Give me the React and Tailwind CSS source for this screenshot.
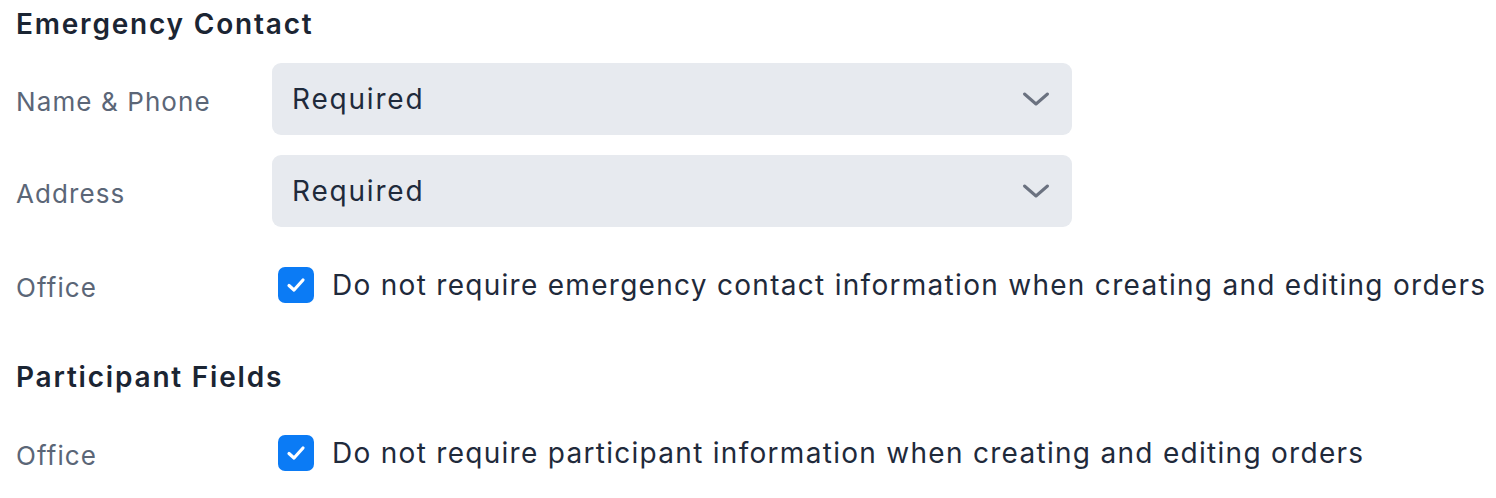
import React from 'react';

const FONT = { fontFamily: 'Inter, "Noto Sans", "Liberation Sans", sans-serif' };

const Chevron = () => (
  <svg width="28" height="16" viewBox="0 0 28 16" fill="none" className="shrink-0">
    <path d="M2.5 3 L14 13 L25.5 3" stroke="#6b7280" strokeWidth="3" strokeLinecap="round" strokeLinejoin="round" />
  </svg>
);

const Check = () => (
  <div className="w-9 h-9 rounded-[7px] bg-[#0b7bf5] flex items-center justify-center shrink-0">
    <svg width="22" height="22" viewBox="0 0 22 22" fill="none">
      <path d="M4 11.5 L9 16 L18 6" stroke="white" strokeWidth="3.2" strokeLinecap="round" strokeLinejoin="round" />
    </svg>
  </div>
);

const Heading = ({ children, className = '' }) => (
  <h2 className={`h-12 flex items-center text-[28px] font-semibold text-[#1b2533] tracking-[1.8px] ${className}`}>
    {children}
  </h2>
);

const Label = ({ children }) => (
  <div className="w-[256px] shrink-0 pt-[5px] text-[26px] tracking-[1.1px] text-[#5b6677]">{children}</div>
);

const SelectRow = ({ label, value, className = '' }) => (
  <div className={`flex items-center ${className}`}>
    <Label>{label}</Label>
    <div className="w-[800px] h-[72px] rounded-[9px] bg-[#e7eaef] flex items-center justify-between pl-5 pr-[22px]">
      <span className="text-[28px] tracking-[1.8px] text-[#1f2a3b]">{value}</span>
      <Chevron />
    </div>
  </div>
);

const CheckRow = ({ label, text, className = '' }) => (
  <div className={`flex items-center h-[72px] ${className}`}>
    <Label>{label}</Label>
    <div className="flex items-center gap-[18px] pl-1.5">
      <Check />
      <span className="text-[28px] tracking-[1.29px] text-[#1f2a3b] whitespace-nowrap">{text}</span>
    </div>
  </div>
);

export default function App() {
  return (
    <div className="bg-white w-[1496px] h-[498px] px-4 overflow-hidden" style={FONT}>
      <Heading>Emergency Contact</Heading>
      <SelectRow label="Name & Phone" value="Required" className="mt-[15px]" />
      <SelectRow label="Address" value="Required" className="mt-5" />
      <CheckRow
        label="Office"
        text="Do not require emergency contact information when creating and editing orders"
        className="mt-[22px]"
      />
      <Heading className="mt-8">Participant Fields</Heading>
      <CheckRow
        label="Office"
        text="Do not require participant information when creating and editing orders"
        className="mt-4"
      />
    </div>
  );
}
